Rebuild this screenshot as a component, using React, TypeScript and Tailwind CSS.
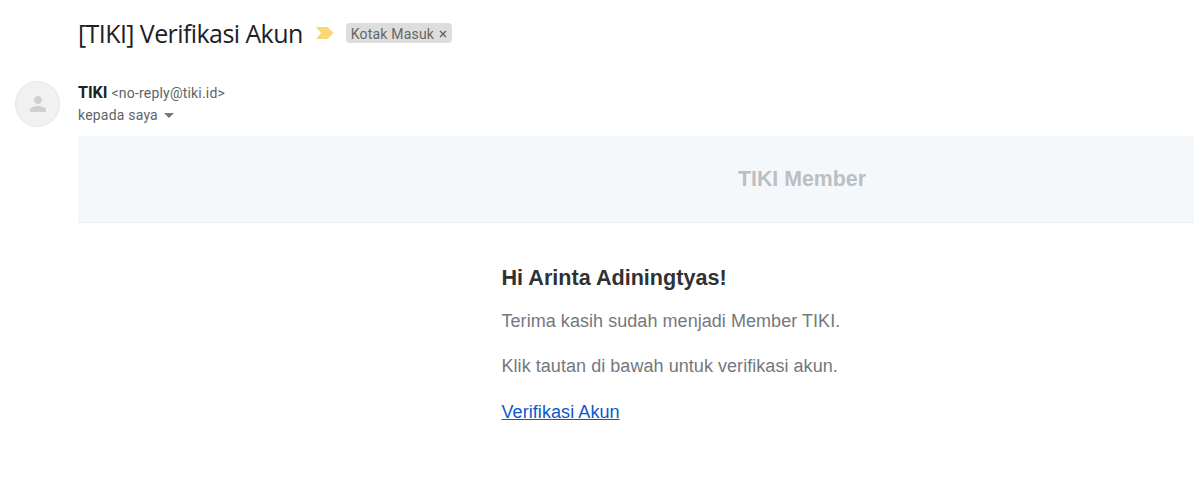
import React from 'react';

const App: React.FC = () => {
  return (
    <div className="w-[1194px] h-[483px] overflow-hidden bg-white font-['Roboto',sans-serif]">
      <div className="flex items-center pl-[78px] pt-[1px] h-[64px]">
        <h2 className="text-[25px] leading-[32px] text-[#202124] font-['Open_Sans',sans-serif] tracking-[-0.58px]">
          [TIKI] Verifikasi Akun
        </h2>
        <svg className="ml-[13px]" width="18" height="14" viewBox="0 0 18 14">
          <path d="M0 1 H11.5 L17.5 7 L11.5 13 H0 L5 7 Z" fill="#fbd772" />
        </svg>
        <span className="ml-[12px] mt-[1px] flex items-center h-[20px] pt-[1px] rounded-[4px] bg-[#dddddd] pl-[5px] pr-[5px] text-[14px] leading-[20px] tracking-[0.2px] text-[#666666]">
          Kotak Masuk
          <svg className="ml-[5px]" width="8" height="8" viewBox="0 0 8 8">
            <path d="M1 1 L7 7 M7 1 L1 7" stroke="#5f6368" strokeWidth="1.4" />
          </svg>
        </span>
      </div>
      <div className="flex pl-[15px] mt-[17px]">
        <div className="flex items-center justify-center w-[45px] h-[46px] rounded-full bg-[#f1f1f1] border border-[#e8e8e8]">
          <svg width="24" height="24" viewBox="0 0 24 24" fill="#d0d0d0">
            <path d="M12 12c2.21 0 4-1.79 4-4s-1.79-4-4-4-4 1.79-4 4 1.79 4 4 4zm0 2c-2.67 0-8 1.34-8 4v2h16v-2c0-2.66-5.33-4-8-4z" />
          </svg>
        </div>
        <div className="ml-[18px]">
          <div className="flex items-baseline h-[22px] pt-[1px] leading-[22px]">
            <span className="text-[16px] font-bold text-[#202124]">TIKI</span>
            <span className="ml-[4px] text-[14px] tracking-[0.2px] text-[#5f6368]">&lt;no-reply@tiki.id&gt;</span>
          </div>
          <div className="flex items-center h-[22px] mt-[1px] text-[14px] tracking-[0.2px] text-[#5f6368]">
            kepada saya
            <svg className="ml-[6px]" width="10" height="5" viewBox="0 0 10 5">
              <path d="M0 0 H10 L5 5 Z" fill="#777777" />
            </svg>
          </div>
        </div>
      </div>
      <div className="ml-[78px] mt-[9px] font-['Liberation_Sans',Arial,sans-serif]">
        <div className="flex items-center h-[87px] pt-[2px] pl-[424px] bg-[#f5f8fa] border-b border-[#e8ecf0]">
          <div className="w-[600px] text-center text-[21.33px] font-bold text-[#bbbfc3]">TIKI Member</div>
        </div>
        <div className="pl-[423.5px] pt-[41px]">
          <h1 className="text-[21.6px] leading-[28px] font-bold text-[#2f3133]">Hi Arinta Adiningtyas!</h1>
          <p className="mt-[16px] text-[18px] tracking-[0.05px] leading-[26px] text-[#74787e]">Terima kasih sudah menjadi Member TIKI.</p>
          <p className="mt-[19px] text-[18px] tracking-[0.05px] leading-[26px] text-[#74787e]">Klik tautan di bawah untuk verifikasi akun.</p>
          <p className="mt-[20px] text-[18px] tracking-[0.07px] leading-[26px]">
            <a href="#" className="text-[#0b57d0] underline">Verifikasi Akun</a>
          </p>
        </div>
      </div>
    </div>
  );
};

export default App;
